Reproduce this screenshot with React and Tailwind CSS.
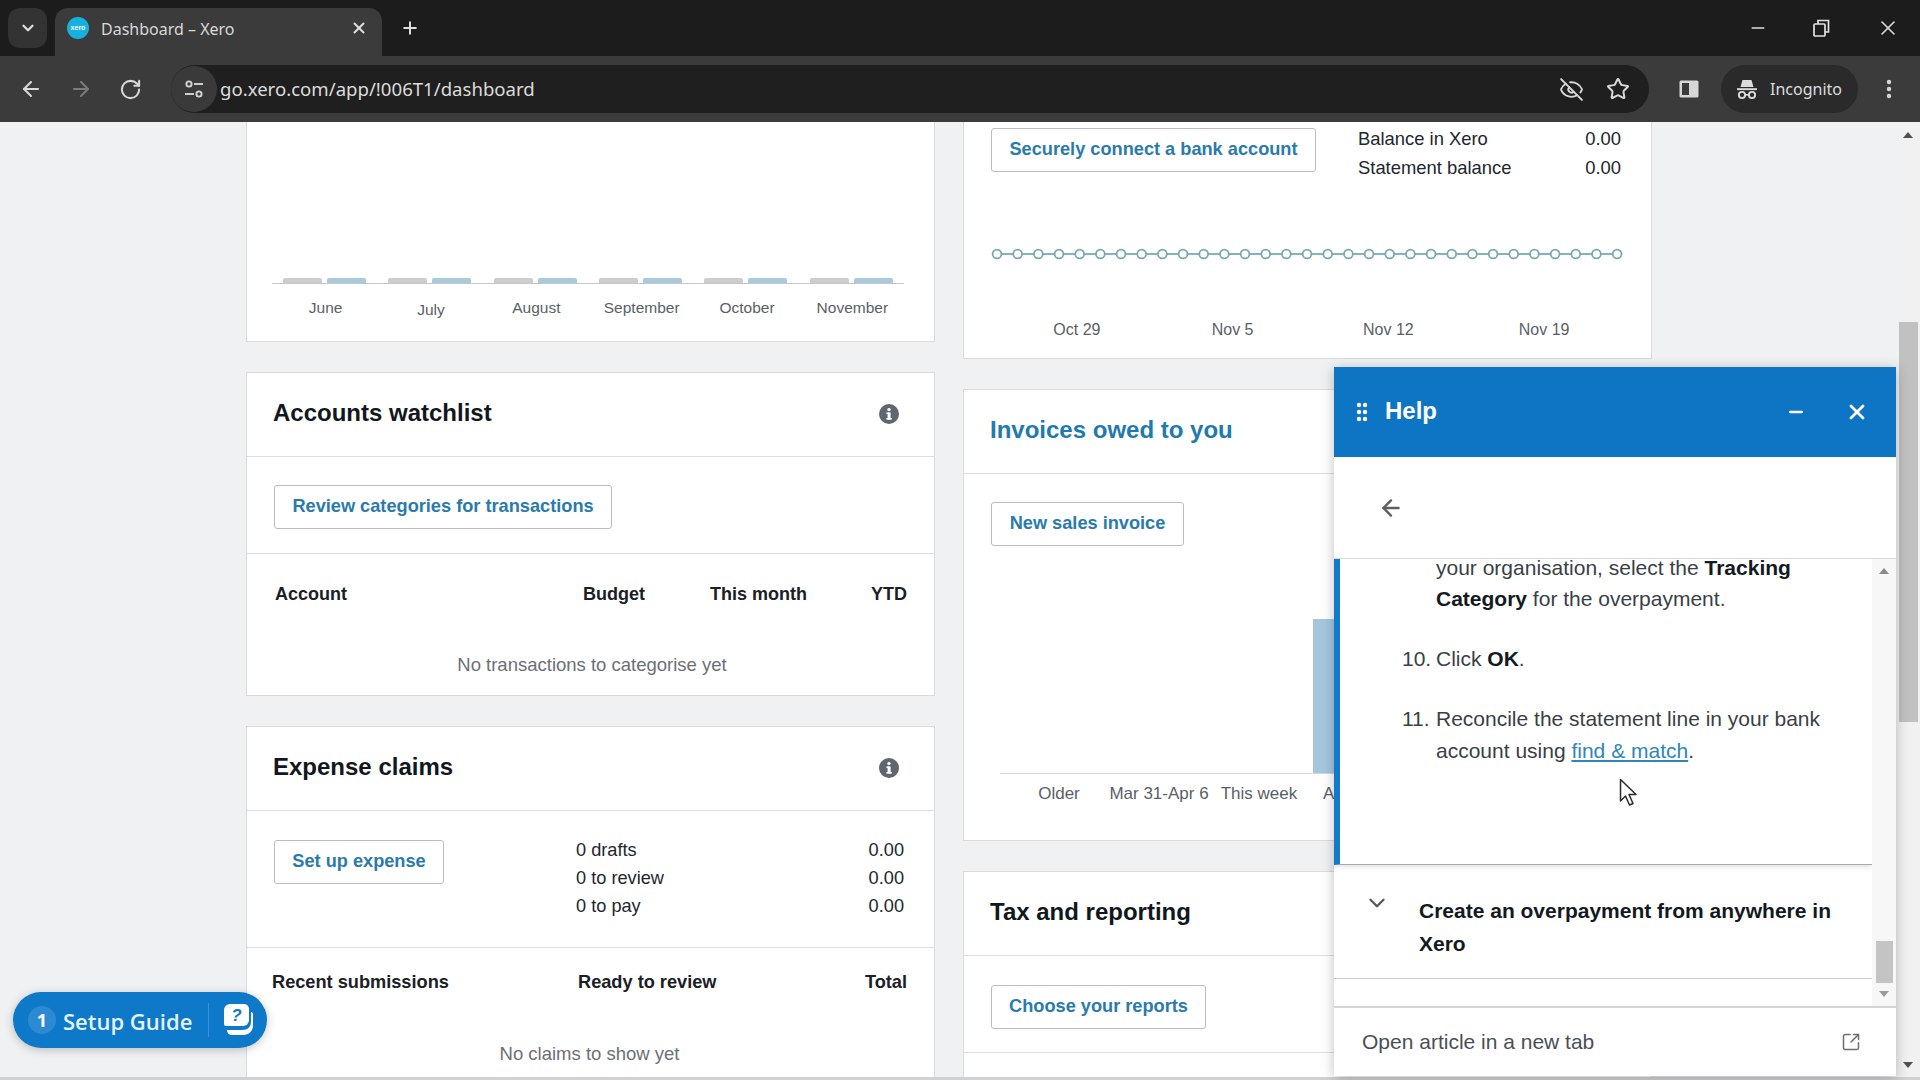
import React from "react";
import { ChevronDown, X, Plus, ArrowLeft, ArrowRight, RotateCw, EyeOff, Star, EllipsisVertical, Minus, SquareArrowOutUpRight, GripVertical } from "lucide-react";

const months = ["June", "July", "August", "September", "October", "November"];
const dates = ["Oct 29", "Nov 5", "Nov 12", "Nov 19"];

function Info() {
  return (
    <svg width="22" height="22" viewBox="0 0 22 22" className="shrink-0">
      <circle cx="11" cy="11" r="10" fill="#5f6670" />
      <rect x="9.6" y="9.5" width="3" height="7" fill="#fff" />
      <rect x="8.4" y="9.5" width="3" height="1.6" fill="#fff" />
      <rect x="8.4" y="15" width="5.4" height="1.6" fill="#fff" />
      <circle cx="11" cy="6.6" r="1.7" fill="#fff" />
    </svg>
  );
}

function Btn({ children, w }) {
  return (
    <div className={`h-[44px] ${w} flex items-center justify-center border border-[#b9bdc1] rounded-[3px] bg-white text-[18.2px] font-bold text-[#2a7bab] whitespace-nowrap`}>
      {children}
    </div>
  );
}

function CardHead({ children, info }) {
  return (
    <div className="h-[84px] shrink-0 flex items-center justify-between pl-[26px] pr-[34px] pb-[4px] border-b border-[#dcdee0]">
      {children}
      {info && <span className="mt-[3px]"><Info /></span>}
    </div>
  );
}

function Title({ children, blue }) {
  return <h2 className={`text-[24px] font-bold whitespace-nowrap ${blue ? "text-[#1f7aad]" : "text-[#12171d]"}`}>{children}</h2>;
}

function TuneIcon() {
  return (
    <svg width="22" height="22" viewBox="0 0 22 22" fill="none" stroke="#d4d4d4" strokeWidth="1.9">
      <circle cx="6" cy="6" r="2.6" />
      <path d="M11 6h9" />
      <circle cx="16" cy="16" r="2.6" />
      <path d="M2 16h9" />
    </svg>
  );
}

function IncognitoIcon() {
  return (
    <svg width="24" height="24" viewBox="0 0 24 24" fill="#dcdcdc">
      <path d="M7.5 3h9l2 7h-13z" />
      <rect x="2" y="11.2" width="20" height="1.9" />
      <circle cx="7" cy="18" r="3.1" fill="none" stroke="#dcdcdc" strokeWidth="1.9" />
      <circle cx="17" cy="18" r="3.1" fill="none" stroke="#dcdcdc" strokeWidth="1.9" />
      <rect x="10" y="17" width="4" height="1.6" />
    </svg>
  );
}

function GuideIcon() {
  return (
    <svg width="30" height="34" viewBox="0 0 30 34">
      <path d="M7 1h14a5 5 0 0 1 5 5v11a6 6 0 0 1-6 6H3a2 2 0 0 1-2-2V7a6 6 0 0 1 6-6z" fill="#fff" />
      <path d="M28 9c1 0 2 1 2 2v11c0 6-4 10-10 10H9c-3 0-5-2-5-5h15c6 0 9-3 9-9z" fill="#fff" />
      <text x="13.5" y="18" textAnchor="middle" fontSize="17" fontWeight="700" fontStyle="italic" fill="#0e78c9" fontFamily="Liberation Sans, sans-serif">?</text>
    </svg>
  );
}

export default function App() {
  return (
    <div className="w-[1920px] h-[1080px] overflow-hidden flex flex-col font-['Liberation_Sans',Arial,sans-serif] bg-[#f0f1f2]">
      {/* tab strip */}
      <div className="h-[56px] shrink-0 bg-[#1c1c1c] flex items-start pt-[8px] pl-[8px] text-[#dedede]">
        <div className="w-[39px] h-[40px] rounded-[12px] bg-[#333333] flex items-center justify-center">
          <ChevronDown size={18} strokeWidth={3} />
        </div>
        <div className="ml-[8px] w-[327px] h-[48px] rounded-t-[13px] bg-[#3b3b3b] flex items-center pl-[12px] pr-[14px] pb-[8px]">
          <div className="w-[22px] h-[22px] rounded-full bg-[#16b1df] flex items-center justify-center text-[7px] font-bold text-white">xero</div>
          <span className="ml-[12px] mt-[2px] flex-1 text-[16px] font-['Noto_Sans',sans-serif] text-[#d8d8d8] whitespace-nowrap">Dashboard – Xero</span>
          <X size={18} strokeWidth={2.6} />
        </div>
        <div className="ml-[18px] h-[40px] flex items-center">
          <Plus size={20} strokeWidth={2.4} />
        </div>
        <div className="flex-1" />
        <div className="h-[40px] flex items-center gap-[44px] pr-[20px]">
          <Minus size={20} strokeWidth={1.6} />
          <svg width="20" height="20" viewBox="0 0 20 20" fill="none" stroke="#e2e2e2" strokeWidth="1.7">
            <rect x="2" y="6" width="11" height="12" rx="1" />
            <path d="M6 6V2.500h10.500V14H13" />
          </svg>
          <X size={24} strokeWidth={1.6} />
        </div>
      </div>

      {/* toolbar */}
      <div className="h-[66px] shrink-0 bg-[#3b3b3b] flex items-center text-[#d9d9d9]">
        <div className="w-[171px] flex items-center pl-[19px] gap-[26px]">
          <ArrowLeft size={24} strokeWidth={2.1} />
          <ArrowRight size={24} strokeWidth={2.1} className="text-[#7b7b7b]" />
          <RotateCw size={23} strokeWidth={2.1} />
        </div>
        <div className="w-[1478px] h-[48px] rounded-full bg-[#1f1f1f] flex items-center pr-[19px]">
          <div className="w-[46px] h-[46px] rounded-full bg-[#3a3a3a] flex items-center justify-center">
            <TuneIcon />
          </div>
          <span className="ml-[3px] flex-1 text-[18.6px] font-['Noto_Sans',sans-serif] text-[#dcdcdc] whitespace-nowrap">go.xero.com/app/!006T1/dashboard</span>
          <EyeOff size={25} strokeWidth={1.8} />
          <Star size={24} strokeWidth={2} className="ml-[22px]" />
        </div>
        <svg width="22" height="22" viewBox="0 0 22 22" className="ml-[29px]">
          <rect x="1.500" y="2.500" width="19" height="17" rx="1.500" fill="#d7d7d7" />
          <rect x="4" y="5" width="7" height="12" fill="#3b3b3b" />
        </svg>
        <div className="ml-[21px] w-[137px] h-[48px] rounded-full bg-[#2a2a2a] flex items-center pl-[14px] gap-[11px] text-[16px] font-['Noto_Sans',sans-serif] text-[#dcdcdc]">
          <IncognitoIcon />
          <span>Incognito</span>
        </div>
        <EllipsisVertical size={24} strokeWidth={2.4} className="ml-[19px]" />
      </div>

      {/* page */}
      <div className="flex-1 min-h-0 relative flex border-b-[3px] border-[#cfd1d3] text-[#22272d]">
        <div className="flex-1 min-w-0 flex pl-[246px] gap-[28px] overflow-hidden">
          {/* left column */}
          <div className="w-[689px] shrink-0 flex flex-col gap-[30px]">
            <section className="h-[220px] shrink-0 bg-white border-x border-b border-[#d9dbdd] pt-[156px] pl-[25px]">
              <div className="w-[632px] border-b border-[#c4c6c8] grid grid-cols-6">
                {months.map((m) => (
                  <div key={m} className="flex justify-center gap-[5px]">
                    <div className="w-[39px] h-[5px] rounded-t-[2px] bg-[#cdcdcd]" />
                    <div className="w-[39px] h-[5px] rounded-t-[2px] bg-[#a9c9dc]" />
                  </div>
                ))}
              </div>
              <div className="ml-[1px] w-[632px] grid grid-cols-6 mt-[14px] text-[15.500px] leading-[20px] text-[#595f66] text-center">
                {months.map((m, i) => (
                  <span key={m} className={i === 1 ? "mt-[2px]" : ""}>{m}</span>
                ))}
              </div>
            </section>

            <section className="h-[324px] shrink-0 bg-white border border-[#d9dbdd] flex flex-col">
              <CardHead info><Title>Accounts watchlist</Title></CardHead>
              <div className="h-[97px] shrink-0 border-b border-[#dcdee0] pt-[28px] pl-[27px]">
                <Btn w="w-[338px]">Review categories for transactions</Btn>
              </div>
              <div className="flex items-center mt-[26px] pl-[28px] pr-[27px] h-[28px] text-[18px] font-bold text-[#1b2026]">
                <span className="flex-1">Account</span>
                <span>Budget</span>
                <span className="w-[162px] text-right">This month</span>
                <span className="w-[100px] text-right">YTD</span>
              </div>
              <p className="mt-[43px] pl-[3px] text-center text-[18.5px] leading-[28px] text-[#6b7076]">No transactions to categorise yet</p>
            </section>

            <section className="flex-1 min-h-0 bg-white border-x border-t border-[#d9dbdd] flex flex-col">
              <CardHead info><Title>Expense claims</Title></CardHead>
              <div className="h-[137px] shrink-0 border-b border-[#dcdee0] pt-[25px] pl-[27px] pr-[30px] flex items-start">
                <div className="mt-[4px]"><Btn w="w-[170px]">Set up expense</Btn></div>
                <div className="ml-[132px] flex-1 text-[18.2px] leading-[28px] text-[#22272d]">
                  <div className="flex justify-between"><span>0 drafts</span><span>0.00</span></div>
                  <div className="flex justify-between"><span>0 to review</span><span>0.00</span></div>
                  <div className="flex justify-between"><span>0 to pay</span><span>0.00</span></div>
                </div>
              </div>
              <div className="flex mt-[21px] h-[28px] items-center pl-[25px] pr-[27px] text-[18.2px] font-bold text-[#1b2026]">
                <span className="w-[306px]">Recent submissions</span>
                <span className="flex-1">Ready to review</span>
                <span>Total</span>
              </div>
              <p className="mt-[43px] pr-[2px] text-center text-[18.5px] leading-[28px] text-[#6b7076]">No claims to show yet</p>
            </section>
          </div>

          {/* right column */}
          <div className="w-[689px] shrink-0 flex flex-col gap-[30px]">
            <section className="h-[237px] shrink-0 bg-white border-x border-b border-[#d9dbdd] flex flex-col">
              <div className="flex pl-[27px] pr-[30px] h-[62px]">
                <div className="pt-[6px]"><Btn w="w-[325px]">Securely connect a bank account</Btn></div>
                <div className="ml-[42px] flex-1 pt-[2px] text-[18.4px] leading-[29px] text-[#22272d]">
                  <div className="flex justify-between"><span>Balance in Xero</span><span>0.00</span></div>
                  <div className="flex justify-between"><span>Statement balance</span><span>0.00</span></div>
                </div>
              </div>
              <svg width="640" height="20" viewBox="0 0 640 20" className="ml-[27px] mt-[60px]">
                <path d="M6 10H626" stroke="#5f97ab" strokeWidth="1.500" />
                {Array.from({ length: 31 }).map((_, i) => (
                  <circle key={i} cx={6 + i * 20.67} cy="10" r="4.400" fill="#fff" stroke="#78a8b8" strokeWidth="1.800" />
                ))}
              </svg>
              <div className="mt-[56px] ml-[35px] w-[623px] grid grid-cols-4 text-[16px] leading-[20px] text-[#595f66] text-center">
                {dates.map((d) => <span key={d}>{d}</span>)}
              </div>
            </section>

            <section className="h-[452px] shrink-0 bg-white border border-[#d9dbdd] flex flex-col">
              <CardHead><Title blue>Invoices owed to you</Title></CardHead>
              <div className="pl-[27px] pt-[28px]">
                <Btn w="w-[193px]">New sales invoice</Btn>
                <div className="ml-[9px] h-[228px] border-b border-[#d4d6d8] pl-[313px] flex items-end">
                  <div className="w-[80px] h-[154px] bg-[#a4c7df]" />
                </div>
                <div className="ml-[18px] mt-[9px] flex text-[17px] leading-[22px] text-[#595f66] whitespace-nowrap">
                  <span className="w-[100px] text-center">Older</span>
                  <span className="w-[100px] text-center">Mar 31-Apr 6</span>
                  <span className="w-[100px] text-center">This week</span>
                  <span className="ml-[14px]">Apr 7-13</span>
                </div>
              </div>
            </section>

            <section className="flex-1 min-h-0 bg-white border-x border-t border-[#d9dbdd] flex flex-col">
              <CardHead><Title>Tax and reporting</Title></CardHead>
              <div className="h-[97px] shrink-0 border-b border-[#dcdee0] pt-[29px] pl-[27px]">
                <Btn w="w-[215px]">Choose your reports</Btn>
              </div>
            </section>
          </div>
        </div>

        {/* page scrollbar */}
        <div className="w-[24px] shrink-0 bg-[#f1f1f1] flex flex-col items-center pt-[10px] pb-[9px] text-[#555]">
          <div className="w-0 h-0 border-x-[5px] border-x-transparent border-b-[6px] border-b-[#505050]" />
          <div className="mt-[184px] w-[19px] h-[400px] bg-[#c1c1c1]" />
          <div className="flex-1" />
          <div className="w-0 h-0 border-x-[5px] border-x-transparent border-t-[6px] border-t-[#505050]" />
        </div>

        {/* setup guide */}
        <div className="absolute left-[13px] top-[870px] w-[254px] h-[56px] rounded-full bg-[#0e78c9] shadow-[0_2px_10px_rgba(0,0,0,0.22)] flex items-center pl-[15px] text-white font-['Open_Sans',sans-serif]">
          <span className="w-[28px] h-[28px] rounded-full bg-[#2c8ad3] flex items-center justify-center text-[18px] font-bold">1</span>
          <span className="ml-[7px] mt-[3px] w-[145px] text-[22px] font-semibold text-[#e3f2fc] whitespace-nowrap">Setup Guide</span>
          <span className="w-px h-[34px] bg-[#3a90d4]" />
          <span className="ml-[14px]"><GuideIcon /></span>
        </div>

        {/* help panel */}
        <div className="absolute left-[1334px] top-[245px] w-[562px] h-[709px] bg-white shadow-[0_2px_12px_rgba(0,0,0,0.25)] flex flex-col">
          <div className="h-[90px] shrink-0 bg-[#0e75c5] flex items-center pl-[16px] pr-[27px] text-white">
            <GripVertical size={24} strokeWidth={2.4} />
            <span className="ml-[11px] flex-1 text-[24px] font-bold pb-[2px]">Help</span>
            <Minus size={20} strokeWidth={2.8} />
            <X size={24} strokeWidth={2.8} className="ml-[39px]" />
          </div>
          <div className="h-[102px] shrink-0 flex items-center pl-[44px] border-b border-[#d6d8da] text-[#5a5f66]">
            <ArrowLeft size={26} strokeWidth={2.2} />
          </div>
          <div className="flex-1 min-h-0 flex">
            <div className="w-[538px] shrink-0 flex flex-col overflow-hidden">
              <div className="h-[306px] shrink-0 border-l-[6px] border-b border-l-[#127ac6] border-b-[#a8aaac] shadow-[0_2px_5px_rgba(0,0,0,0.12)] pl-[62px] pr-[20px] text-[21px] text-[#3a3f45] overflow-hidden">
                <div className="flex -mt-[7px] leading-[31px]">
                  <span className="w-[34px] shrink-0" />
                  <p>your organisation, select the <b className="text-[#14191f]">Tracking Category</b> for the overpayment.</p>
                </div>
                <div className="flex mt-[29px] leading-[31px]">
                  <span className="w-[34px] shrink-0">10.</span>
                  <p>Click <b className="text-[#14191f]">OK</b>.</p>
                </div>
                <div className="flex mt-[29px] leading-[32px]">
                  <span className="w-[34px] shrink-0">11.</span>
                  <p>Reconcile the statement line in your bank account using <span className="text-[#2f86b8] underline">find &amp; match</span>.</p>
                </div>
              </div>
              <div className="h-[114px] shrink-0 border-b border-[#cdcfd1] flex items-start">
                <ChevronDown size={26} strokeWidth={2.2} className="ml-[30px] mt-[25px] shrink-0 text-[#555a60]" />
                <p className="ml-[29px] mt-[29px] w-[450px] text-[21px] leading-[33px] font-bold text-[#14191f]">Create an overpayment from anywhere in Xero</p>
              </div>
            </div>
            <div className="flex-1 bg-[#f7f7f7] flex flex-col items-center pt-[9px] pb-[9px]">
              <div className="w-0 h-0 border-x-[5px] border-x-transparent border-b-[6px] border-b-[#8a8a8a]" />
              <div className="flex-1" />
              <div className="w-[17px] h-[42px] bg-[#c4c4c4]" />
              <div className="mt-[8px] w-0 h-0 border-x-[5px] border-x-transparent border-t-[6px] border-t-[#9a9a9a]" />
            </div>
          </div>
          <div className="h-[70px] shrink-0 border-t-2 border-[#d2d4d6] flex items-center justify-between pl-[28px] pr-[35px] text-[#4a4f55]">
            <span className="text-[21px]">Open article in a new tab</span>
            <SquareArrowOutUpRight size={20} strokeWidth={1.8} className="text-[#6a6f75]" />
          </div>
        </div>

        {/* mouse pointer */}
        <svg width="20" height="30" viewBox="0 0 20 30" className="absolute left-[1619px] top-[656px]">
          <path d="M1.500 1.500V23l5-5 4 9 3.500-1.500-4-9h7z" fill="#fff" stroke="#2b2b2b" strokeWidth="1.500" strokeLinejoin="round" />
        </svg>
      </div>
    </div>
  );
}
